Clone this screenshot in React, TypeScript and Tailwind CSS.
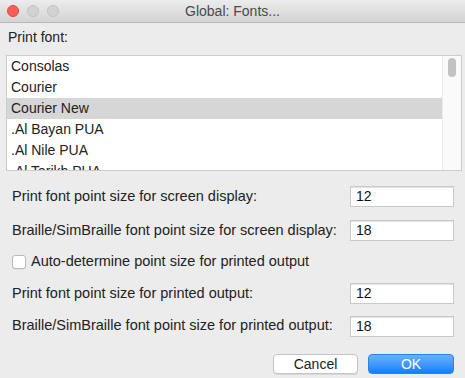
import React from "react";

const fonts = ["Consolas", "Courier", "Courier New", ".Al Bayan PUA", ".Al Nile PUA", ".Al Tarikh PUA"];

function Field({ label, value, mt }: { label: string; value: string; mt: string }) {
  return (
    <div className={`flex items-center justify-between pl-[12px] pr-[11px] ${mt}`}>
      <span className="text-[14.5px] text-[#222] whitespace-nowrap">{label}</span>
      <div className="w-[104px] h-[21px] bg-white border border-[#c9c9c9] shadow-[inset_0_1px_0_#e4e4e4] flex items-center pl-[5px] text-[14px] text-[#111]">
        {value}
      </div>
    </div>
  );
}

export default function App() {
  return (
    <div
      className="w-[465px] h-[378px] bg-[#ececec] overflow-hidden flex flex-col"
      style={{ fontFamily: '"Liberation Sans", Arial, sans-serif' }}
    >
      {/* Title bar */}
      <div className="h-[23px] shrink-0 grid grid-cols-[1fr_auto_1fr] items-center bg-gradient-to-b from-[#ececec] to-[#d4d4d4] border-b border-[#b8b8b8]">
        <div className="flex items-center gap-[8px] pl-[7px]">
          <span className="w-[12px] h-[12px] rounded-full bg-[#fc5f57] border border-[#e2463f]" />
          <span className="w-[12px] h-[12px] rounded-full bg-[#d2d2d2] border border-[#c2c2c2]" />
          <span className="w-[12px] h-[12px] rounded-full bg-[#d2d2d2] border border-[#c2c2c2]" />
        </div>
        <span className="text-[14px] text-[#4a4a4a] leading-none">Global: Fonts...</span>
        <div />
      </div>

      {/* Print font label */}
      <div className="pl-[8px] pt-[6px] text-[14px] leading-[16px] text-[#222]">Print font:</div>

      {/* Font list */}
      <div className="mt-[10px] ml-[6px] mr-[3px] h-[116px] border border-[#cdcdcd] bg-white flex overflow-hidden">
        <div className="flex-1 flex flex-col overflow-hidden">
          {fonts.map((f, i) => (
            <div
              key={f}
              className={`h-[21px] shrink-0 flex items-center pl-[4px] text-[14px] text-[#222] ${
                i === 2 ? "bg-[#d6d6d6]" : ""
              }`}
            >
              {f}
            </div>
          ))}
        </div>
        <div className="w-[19px] shrink-0 bg-[#fafafa] border-l border-[#ececec] flex justify-center pt-[2px]">
          <div className="w-[8px] h-[19px] rounded-full bg-[#c2c2c2]" />
        </div>
      </div>

      <Field label="Print font point size for screen display:" value="12" mt="mt-[15px]" />
      <Field label="Braille/SimBraille font point size for screen display:" value="18" mt="mt-[12px]" />

      <div className="flex items-center pl-[12px] mt-[13px] h-[14px]">
        <span className="w-[14px] h-[14px] rounded-[3px] bg-white border border-[#b8b8b8] shadow-[0_1px_0_#e0e0e0]" />
        <span className="ml-[5px] text-[14.5px] text-[#222] whitespace-nowrap">Auto-determine point size for printed output</span>
      </div>

      <Field label="Print font point size for printed output:" value="12" mt="mt-[14px]" />
      <Field label="Braille/SimBraille font point size for printed output:" value="18" mt="mt-[11px]" />

      <div className="flex justify-end gap-[10px] pr-[11px] mt-[17px]">
        <button className="w-[85px] h-[20px] rounded-[4px] bg-white border border-[#c4c4c4] shadow-[0_1px_0_#d8d8d8] text-[14px] text-[#222] leading-none">
          Cancel
        </button>
        <button className="w-[86px] h-[20px] rounded-[4px] bg-gradient-to-b from-[#69b1fa] to-[#0e7ffe] border border-[#2a83ec] text-[14px] text-white leading-none">
          OK
        </button>
      </div>
    </div>
  );
}
